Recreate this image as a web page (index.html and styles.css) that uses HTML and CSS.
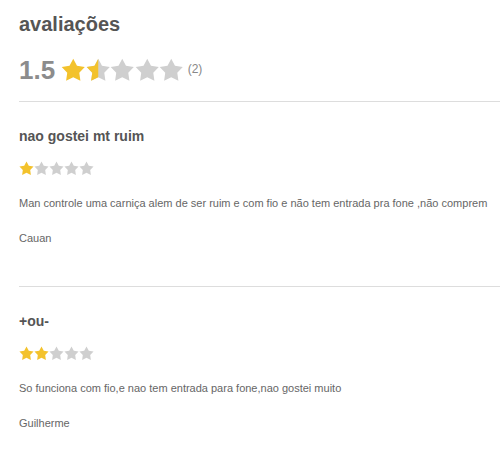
FILE: index.html
```html
<!DOCTYPE html>
<html lang="pt">
<head>
<meta charset="utf-8">
<link rel="stylesheet" href="styles.css">
</head>
<body>
<svg width="0" height="0" class="defs" aria-hidden="true">
  <defs>
    <symbol id="star" viewBox="0 0 24 24">
      <polygon points="12,0.8 15.65,7.6 23.3,8.9 17.9,14.5 19,22.2 12,18.8 5,22.2 6.1,14.5 0.7,8.9 8.35,7.6"/>
    </symbol>
    <clipPath id="half"><rect x="0" y="0" width="12" height="24"/></clipPath>
  </defs>
</svg>
<div class="page">
  <h1 class="title">avaliações</h1>
  <div class="summary">
    <span class="score">1.5</span>
    <span class="stars big">
      <svg viewBox="0 0 24 24" class="on"><use href="#star"/></svg>
      <svg viewBox="0 0 24 24" class="off"><use href="#star"/><g clip-path="url(#half)" class="on"><use href="#star"/></g></svg>
      <svg viewBox="0 0 24 24" class="off"><use href="#star"/></svg>
      <svg viewBox="0 0 24 24" class="off"><use href="#star"/></svg>
      <svg viewBox="0 0 24 24" class="off"><use href="#star"/></svg>
    </span>
    <span class="count">(2)</span>
  </div>

  <div class="review">
    <h2 class="review-title">nao gostei mt ruim</h2>
    <div class="stars small">
      <svg viewBox="0 0 24 24" class="on"><use href="#star"/></svg>
      <svg viewBox="0 0 24 24" class="off"><use href="#star"/></svg>
      <svg viewBox="0 0 24 24" class="off"><use href="#star"/></svg>
      <svg viewBox="0 0 24 24" class="off"><use href="#star"/></svg>
      <svg viewBox="0 0 24 24" class="off"><use href="#star"/></svg>
    </div>
    <p class="review-text">Man controle uma carniça alem de ser ruim e com fio e não tem entrada pra fone ,não comprem</p>
    <p class="author">Cauan</p>
  </div>

  <div class="review">
    <h2 class="review-title">+ou-</h2>
    <div class="stars small">
      <svg viewBox="0 0 24 24" class="on"><use href="#star"/></svg>
      <svg viewBox="0 0 24 24" class="on"><use href="#star"/></svg>
      <svg viewBox="0 0 24 24" class="off"><use href="#star"/></svg>
      <svg viewBox="0 0 24 24" class="off"><use href="#star"/></svg>
      <svg viewBox="0 0 24 24" class="off"><use href="#star"/></svg>
    </div>
    <p class="review-text">So funciona com fio,e nao tem entrada para fone,nao gostei muito</p>
    <p class="author">Guilherme</p>
  </div>
</div>
</body>
</html>
```
FILE: styles.css
```css
html, body {
  margin: 0;
  padding: 0;
  background: #ffffff;
}
.defs {
  position: absolute;
  width: 0;
  height: 0;
  overflow: hidden;
}
.page {
  padding: 12px 0 0 19px;
  font-family: "Liberation Sans", Arial, sans-serif;
  color: #666666;
}
.title {
  margin: 0;
  font-size: 20px;
  line-height: 24px;
  font-weight: bold;
  color: #555555;
}
.summary {
  display: flex;
  align-items: center;
  height: 30px;
  margin-top: 19px;
  padding-bottom: 16px;
}
.score {
  font-size: 26px;
  font-weight: bold;
  color: #8c8c8c;
  line-height: 30px;
  margin-right: 6px;
}
.stars {
  display: flex;
}
.stars svg {
  display: block;
}
.big svg {
  width: 24.5px;
  height: 24.5px;
}
.small svg {
  width: 15px;
  height: 15px;
}
.on {
  fill: #f3c22c;
}
.off {
  fill: #cfcfcf;
}
.count {
  font-size: 12px;
  color: #888888;
  margin-left: 4px;
  margin-top: -2px;
}
.review {
  border-top: 1px solid #dddddd;
  padding-top: 24px;
  padding-bottom: 40px;
}
.review-title {
  margin: 0;
  font-size: 14px;
  line-height: 20px;
  font-weight: bold;
  color: #555555;
}
.review .stars {
  margin-top: 15px;
}
.review-text {
  margin: 19px 0 0;
  font-size: 11px;
  line-height: 16px;
  color: #666666;
}
.author {
  margin: 19px 0 0;
  font-size: 11px;
  line-height: 16px;
  color: #666666;
}
```
